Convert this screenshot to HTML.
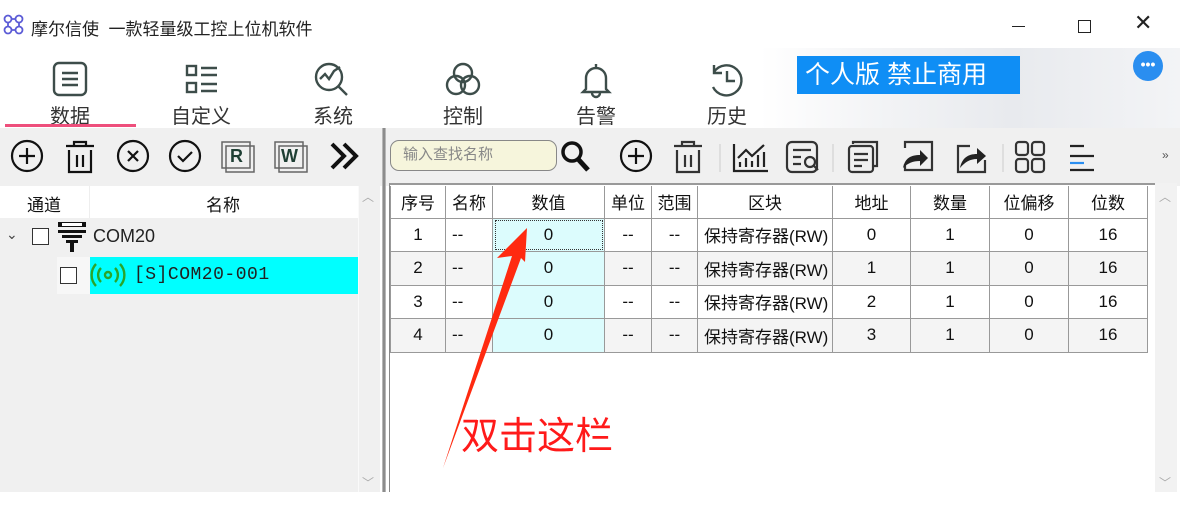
<!DOCTYPE html>
<html><head><meta charset="utf-8"><style>
*{margin:0;padding:0;box-sizing:border-box}
body{width:1180px;height:505px;overflow:hidden;background:#fff;position:relative;font-family:"Liberation Sans","Noto Sans CJK SC",sans-serif;color:#111}
.a{position:absolute}
.nav{position:absolute;top:100px;width:80px;text-align:center;font-size:20px;color:#333}
svg{position:absolute;overflow:visible}
table{border-collapse:collapse;position:absolute;left:390px;top:186px;font-size:17px}
td{border:1px solid #999;text-align:center;height:33.5px;padding:0}
tr.h td{height:32px;background:#fff;border-top:none}
tr.g td{background:#f4f4f4}
tr td.v{background:#dcfcfd}
td.l{text-align:left;padding-left:6px}
</style></head><body>
<svg style="left:3px;top:14px" width="24" height="24" viewBox="0 0 24 24" fill="none" stroke="#5b5bd6" stroke-width="1.8"><circle cx="5" cy="5" r="3.5"/><circle cx="16" cy="5" r="3.5"/><circle cx="5" cy="16" r="3.5"/><circle cx="16" cy="16" r="3.5"/><path d="M8 5h5M8 16h5M5 8v5M16 8v5"/></svg>
<div class="a" style="left:31px;top:15px;font-size:17px;color:#222">摩尔信使 &nbsp;一款轻量级工控上位机软件</div>
<div class="a" style="left:1012px;top:26px;width:13px;height:1px;background:#222"></div>
<div class="a" style="left:1078px;top:20px;width:13px;height:13px;border:1.3px solid #222"></div>
<div class="a" style="left:1134px;top:10px;font-size:22px;color:#222;font-weight:300">✕</div>
<div class="a" style="left:760px;top:48px;width:420px;height:80px;background:linear-gradient(90deg,#fff 0%,#f2f3f5 30%,#e8eaee 60%,#f3f4f6 100%)"></div>
<div class="a" style="left:797px;top:56px;width:223px;height:38px;background:#0f8ef5;color:#fff;font-size:25px;line-height:38px;padding-left:8px">个人版 禁止商用</div>
<div class="a" style="left:1133px;top:51px;width:30px;height:30px;border-radius:50%;background:#2a8ef0;color:#fff;font-size:14px;text-align:center;line-height:27px;font-weight:bold">•••</div>
<svg style="left:53px;top:62px" width="34" height="34" fill="none" stroke="#3d4d4a" stroke-width="2.4"><rect x="1" y="1" width="32" height="32" rx="5"/><path d="M9 11h16M9 17h16M9 23h16"/></svg>
<svg style="left:186px;top:65px" width="32" height="30" fill="none" stroke="#3d4d4a" stroke-width="2.4"><rect x="1" y="1" width="9" height="9"/><rect x="1" y="18" width="9" height="9"/><path d="M15 3h16M15 10h16M15 19h16M15 26h16"/></svg>
<svg style="left:314px;top:62px" width="36" height="36" fill="none" stroke="#3d4d4a" stroke-width="2.4"><circle cx="15" cy="15" r="13"/><path d="M24 24l9 9M6 17l5-5 4 5 5-8 6-4"/></svg>
<svg style="left:445px;top:62px" width="36" height="36" fill="none" stroke="#3d4d4a" stroke-width="2.4"><circle cx="18" cy="11" r="9"/><circle cx="11" cy="23" r="9"/><circle cx="25" cy="23" r="9"/></svg>
<svg style="left:579px;top:62px" width="34" height="36" fill="none" stroke="#3d4d4a" stroke-width="2.4"><path d="M17 2v3M7 27V16a10 10 0 0 1 20 0v11l3 3H4zM13 31a4 4 0 0 0 8 0"/></svg>
<svg style="left:708px;top:62px" width="36" height="36" fill="none" stroke="#3d4d4a" stroke-width="2.4"><path d="M6 10a15 15 0 1 1-1 15M6 3v8h8M19 9v10h8"/></svg>
<div class="nav" style="left:30px">数据</div>
<div class="nav" style="left:161px">自定义</div>
<div class="nav" style="left:293px">系统</div>
<div class="nav" style="left:423px">控制</div>
<div class="nav" style="left:556px">告警</div>
<div class="nav" style="left:687px">历史</div>
<div class="a" style="left:5px;top:124px;width:131px;height:3px;background:#ee4f7c"></div>
<div class="a" style="left:0;top:128px;width:1180px;height:58px;background:#f0f0f0"></div>
<div class="a" style="left:0;top:186px;width:380px;height:306px;background:#f0f0f0"></div>
<svg style="left:10px;top:140px" width="360" height="34" fill="none" stroke="#111" stroke-width="2.2">
<circle cx="17" cy="16" r="15"/><path d="M17 8v16M9 16h16"/>
<path d="M56 6h28M64 6V2h12v4M59 10v22h22V10M67 15v12M73 15v12"/>
<circle cx="123" cy="16" r="15"/><path d="M118 11l10 10M128 11l-10 10"/>
<circle cx="175" cy="16" r="15"/><path d="M168 16l5 5 9-9"/>
<rect x="212" y="2" width="28" height="26" stroke="#666" stroke-width="1.5"/><rect x="216" y="6" width="28" height="26" stroke="#666" stroke-width="1.5"/>
<rect x="265" y="2" width="28" height="26" stroke="#666" stroke-width="1.5"/><rect x="269" y="6" width="28" height="26" stroke="#666" stroke-width="1.5"/>
<path d="M322 4l12 12-12 12M334 4l12 12-12 12" stroke-width="4"/>
</svg>
<div class="a" style="left:230px;top:146px;font-size:18px;font-weight:bold;color:#1f3f34">R</div>
<div class="a" style="left:281px;top:146px;font-size:18px;font-weight:bold;color:#1f3f34">W</div>
<div class="a" style="left:382px;top:128px;width:4px;height:364px;background:linear-gradient(90deg,#ccc,#777,#ccc)"></div>
<div class="a" style="left:358px;top:186px;width:22px;height:306px;background:#f0f0f0;border-left:1px solid #fafafa"></div>
<div class="a" style="left:362px;top:188px;color:#aaa;font-size:12px">︿</div>
<div class="a" style="left:362px;top:474px;color:#aaa;font-size:12px">﹀</div>
<div class="a" style="left:390px;top:140px;width:167px;height:31px;border:1.5px solid #888;border-radius:9px;background:#f6f5dc;font-size:15px;color:#888;line-height:28px;padding-left:12px">输入查找名称</div>
<svg style="left:560px;top:140px" width="620" height="34" fill="none" stroke="#111" stroke-width="2.2">
<circle cx="12" cy="12" r="9" stroke-width="3.5"/><path d="M18 19l10 11" stroke-width="5"/>
<circle cx="76" cy="16" r="15"/><path d="M76 8v16M68 16h16"/>
<path d="M114 6h28M122 6V2h12v4M117 10v22h22V10M125 15v12M131 15v12" stroke="#333"/>
<path d="M160 4v28" stroke="#ccc" stroke-width="1"/>
<path d="M174 4v27h34M180 27v-5M186 27v-9M192 27v-6M198 27v-12M204 27v-15M178 18l8-8 6 6 12-11" stroke="#222"/>
<rect x="227" y="2" width="30" height="30" rx="5" stroke="#333"/><path d="M233 10h18M233 17h8M233 24h8" stroke="#333"/><circle cx="250" cy="22" r="5" stroke="#333"/><path d="M254 26l4 4" stroke="#333"/>
<path d="M273 4v28" stroke="#ccc" stroke-width="1"/>
<rect x="289" y="6" width="24" height="26" rx="3" stroke="#333"/><path d="M293 4V2h24v24h-4M294 14h14M294 20h14M294 26h8" stroke="#333"/>
<path d="M345 8V2h27v28h-27v-6" stroke="#333"/><path d="M343 28c2-10 8-13 17-13v-5l8 8-8 8v-5c-7 0-12 2-17 7z" fill="#222" stroke="none"/>
<path d="M410 6h-12v26h27v-12" stroke="#333"/><path d="M400 28c2-10 8-14 17-14V8l9 8-9 8v-5c-7 0-12 3-17 9z" fill="#222" stroke="none"/>
<path d="M443 4v28" stroke="#ccc" stroke-width="1"/>
<rect x="456" y="2" width="12" height="13" rx="3" stroke="#333"/><rect x="472" y="2" width="12" height="13" rx="3" stroke="#333"/><rect x="456" y="19" width="12" height="13" rx="3" stroke="#333"/><rect x="472" y="19" width="12" height="13" rx="3" stroke="#333"/>
<path d="M510 6h14M510 16h24M510 30h24" stroke="#222"/><path d="M510 23h14" stroke="#2a8ef0"/>
</svg>
<div class="a" style="left:1162px;top:148px;font-size:12px;color:#555">»</div>
<div class="a" style="left:0;top:186px;width:358px;height:32px;background:#fff"></div>
<div class="a" style="left:89px;top:186px;width:1px;height:32px;background:#eee"></div>
<div class="a" style="left:27px;top:191px;font-size:17px">通道</div>
<div class="a" style="left:206px;top:191px;font-size:17px">名称</div>
<div class="a" style="left:6px;top:226px;font-size:14px;color:#444">⌄</div>
<div class="a" style="left:32px;top:228px;width:17px;height:17px;border:1px solid #333;background:#fff"></div>
<svg style="left:58px;top:221px" width="28" height="32"><rect x="0" y="1" width="28" height="5" fill="#111"/><rect x="4" y="2" width="20" height="3" fill="#fff"/><rect x="0" y="9" width="28" height="3" fill="#111"/><rect x="4" y="14" width="20" height="3" fill="#111"/><rect x="8" y="19" width="12" height="3" fill="#111"/><rect x="12" y="22" width="4" height="9" fill="#111"/></svg>
<div class="a" style="left:93px;top:226px;font-size:18px;color:#222">COM20</div>
<div class="a" style="left:57px;top:257px;width:33px;height:37px;background:#f7f7f7"></div>
<div class="a" style="left:60px;top:267px;width:17px;height:17px;border:1px solid #333;background:#fff"></div>
<div class="a" style="left:90px;top:257px;width:268px;height:37px;background:#00ffff"></div>
<svg style="left:92px;top:263px" width="34" height="24" fill="none" stroke="#2aa52a" stroke-width="2.4"><circle cx="16" cy="12" r="3"/><path d="M9 5a10 10 0 0 0 0 14M23 5a10 10 0 0 1 0 14M4 1a16 16 0 0 0 0 22M28 1a16 16 0 0 1 0 22"/></svg>
<div class="a" style="left:134px;top:265px;font-size:18px;font-family:'Liberation Mono',monospace;color:#222;letter-spacing:0.5px">[S]COM20-001</div>
<div class="a" style="left:389px;top:183px;width:766px;height:309px;background:#fff;border-left:1.5px solid #888;border-top:2px solid #999"></div>
<div class="a" style="left:1155px;top:183px;width:22px;height:309px;background:#f2f2f2"></div>
<div class="a" style="left:1159px;top:188px;color:#aaa;font-size:12px">︿</div>
<div class="a" style="left:1159px;top:474px;color:#aaa;font-size:12px">﹀</div>
<table>
<colgroup><col style="width:55px"><col style="width:47px"><col style="width:112px"><col style="width:47px"><col style="width:46px"><col style="width:135px"><col style="width:78px"><col style="width:79px"><col style="width:79px"><col style="width:79px"></colgroup>
<tr class="h"><td>序号</td><td>名称</td><td>数值</td><td>单位</td><td>范围</td><td>区块</td><td>地址</td><td>数量</td><td>位偏移</td><td>位数</td></tr>
<tr><td>1</td><td class="l">--</td><td class="v" style="outline:1px dotted #333;outline-offset:-3px">0</td><td>--</td><td>--</td><td class="l">保持寄存器(RW)</td><td>0</td><td>1</td><td>0</td><td>16</td></tr>
<tr class="g"><td>2</td><td class="l">--</td><td class="v">0</td><td>--</td><td>--</td><td class="l">保持寄存器(RW)</td><td>1</td><td>1</td><td>0</td><td>16</td></tr>
<tr><td>3</td><td class="l">--</td><td class="v">0</td><td>--</td><td>--</td><td class="l">保持寄存器(RW)</td><td>2</td><td>1</td><td>0</td><td>16</td></tr>
<tr class="g"><td>4</td><td class="l">--</td><td class="v">0</td><td>--</td><td>--</td><td class="l">保持寄存器(RW)</td><td>3</td><td>1</td><td>0</td><td>16</td></tr>
</table>
<svg style="left:0;top:0" width="1180" height="505"><path d="M527 228L497 258L512 256L443 468L521 258L525 262Z" fill="#ff2a10"/></svg>
<div class="a" style="left:461px;top:413px;font-size:38px;color:#ff1a1a;line-height:48px">双击这栏</div>
</body></html>
